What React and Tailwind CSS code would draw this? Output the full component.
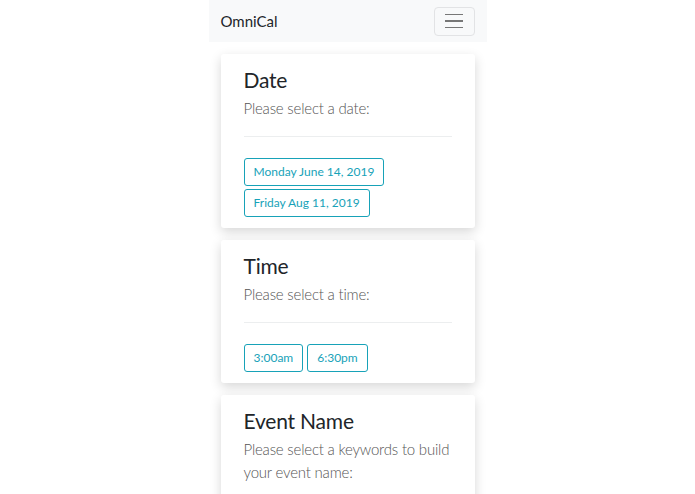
import { useState } from "react";

const dates = ["Monday June 14, 2019", "Friday Aug 11, 2019"];
const times = ["3:00am", "6:30pm"];

function Choice({ label }) {
  return (
    <button className="h-[28px] px-[9px] border border-[#17a2b8] rounded-[3px] text-[12px] text-[#17a2b8] bg-white leading-none">
      {label}
    </button>
  );
}

function Card({ title, subtitle, children }) {
  return (
    <div className="bg-white rounded-[3px] shadow-[0_4px_12px_rgba(0,0,0,0.16)] px-[23px] pt-[12px] pb-[11px] mb-[12px]">
      <h2 className="text-[21px] leading-[27px] tracking-[-0.2px] text-[#212529]">{title}</h2>
      <p className="text-[15px] leading-[23px] tracking-[-0.2px] font-light text-[#555] mt-[4px]">{subtitle}</p>
      {children}
    </div>
  );
}

export default function App() {
  const [open, setOpen] = useState(false);

  return (
    <div className="min-h-screen bg-white font-['Lato',sans-serif]">
      <div className="w-[278px] mx-auto">
        {/* NAVBAR */}
        <header className="h-[42px] bg-[#f8f9fa] flex items-center justify-between pl-[12px] pr-[12px]">
          <span className="text-[15px] text-[#212529]">OmniCal</span>
          <button
            onClick={() => setOpen(!open)}
            className="w-[41px] h-[29px] border border-[#e2e3e5] rounded-[4px] flex flex-col items-center justify-center gap-[5px]"
          >
            <span className="block w-[18px] h-[1.5px] bg-[#777]" />
            <span className="block w-[18px] h-[1.5px] bg-[#777]" />
            <span className="block w-[18px] h-[1.5px] bg-[#777]" />
          </button>
        </header>

        <main className="px-[12px] pt-[12px]">
          <Card title="Date" subtitle="Please select a date:">
            <hr className="border-[#eceeef] mt-[16px] mb-[21px]" />
            <div className="flex flex-col items-start gap-[3px]">
              {dates.map((d) => (
                <Choice key={d} label={d} />
              ))}
            </div>
          </Card>

          <Card title="Time" subtitle="Please select a time:">
            <hr className="border-[#eceeef] mt-[16px] mb-[21px]" />
            <div className="flex gap-[4px]">
              {times.map((t) => (
                <Choice key={t} label={t} />
              ))}
            </div>
          </Card>

          <Card title="Event Name" subtitle="Please select a keywords to build your event name:">
            <hr className="border-[#eceeef] mt-[16px] mb-[21px]" />
          </Card>
        </main>
      </div>
    </div>
  );
}
